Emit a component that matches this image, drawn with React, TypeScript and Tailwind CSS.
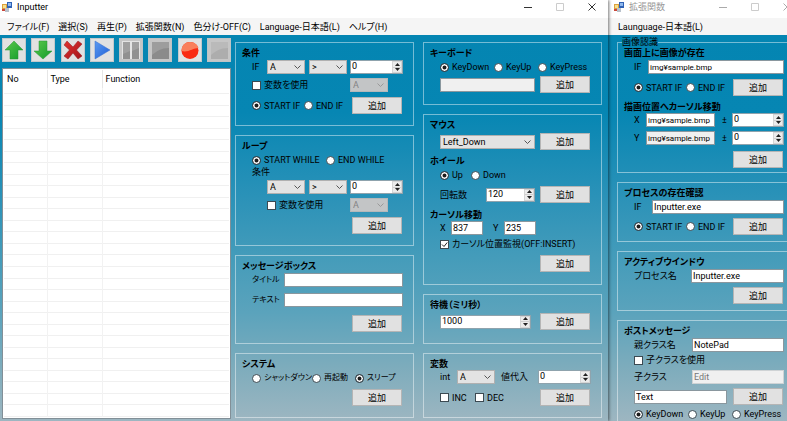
import { useId, type ReactNode } from 'react';

type P = { className?: string };

function Group({ title, children, className = '' }: P & { title: string; children: ReactNode }) {
  return (
    <section className={`flex flex-col border border-white/45 pl-4 pt-1 ${className}`}>
      <Heading>{title}</Heading>
      {children}
    </section>
  );
}

function Heading({ children, className = '' }: P & { children: ReactNode }) {
  return <h2 className={`-ml-2.5 h-3 whitespace-nowrap font-bold leading-3 ${className}`}>{children}</h2>;
}

function Row({ children, className = '' }: P & { children: ReactNode }) {
  return <div className={`flex shrink-0 items-center whitespace-nowrap ${className}`}>{children}</div>;
}

function Add({ className = '' }: P) {
  return (
    <button
      type="button"
      className={`ml-auto mr-px h-[17px] w-[50px] shrink-0 border border-[#b5b5b5] bg-[#e1e1e1] leading-3 ${className}`}
    >
      追加
    </button>
  );
}

function Pick({ value, label, disabled, className = '' }: P & { value: string; label: string; disabled?: boolean }) {
  return (
    <span
      className={`relative block h-3.5 shrink-0 border ${
        disabled ? 'border-[#b4b8ba] bg-[#c3c5c6] text-[#838383]' : 'border-[#b0b0b0] bg-[#e3e3e3]'
      } ${className}`}
    >
      <select
        aria-label={label}
        disabled={disabled}
        className="block h-full w-full appearance-none pl-0.5 leading-3 opacity-100 outline-none"
      >
        <option>{value}</option>
      </select>
      <svg viewBox="0 0 7 4" className="pointer-events-none absolute right-[3px] top-1 h-1 w-[7px]" fill="none" stroke={disabled ? '#999' : '#555'}>
        <path d="M.5.5l3 3 3-3" />
      </svg>
    </span>
  );
}

function Num({ value, label, className = '' }: P & { value: string; label: string }) {
  return (
    <span className={`flex h-3.5 shrink-0 border border-[#8fa3ad] bg-white ${className}`}>
      <input aria-label={label} defaultValue={value} className="h-2.5 w-0 flex-1 pl-px leading-[10px] outline-none" />
      <span className="flex w-2.5 flex-col border border-[#d5d5d5] bg-[#ececec]">
        <button type="button" aria-label="+" className="flex flex-1 items-center justify-center border-b border-[#cfcfcf]">
          <svg viewBox="0 0 5 3" className="h-[3px] w-[5px]">
            <path d="M2.5 0L5 3H0z" fill="#222" />
          </svg>
        </button>
        <button type="button" aria-label="-" className="flex flex-1 items-center justify-center">
          <svg viewBox="0 0 5 3" className="h-[3px] w-[5px]">
            <path d="M2.5 3L5 0H0z" fill="#222" />
          </svg>
        </button>
      </span>
    </span>
  );
}

function Text({ value = '', label, disabled, className = 'bg-white' }: P & { value?: string; label: string; disabled?: boolean }) {
  return (
    <input
      aria-label={label}
      defaultValue={value}
      disabled={disabled}
      className={`h-3.5 border border-[#8a979e] px-px leading-3 outline-none ${className}`}
    />
  );
}

function Radio({ name, children, on, className = '' }: P & { name: string; children: ReactNode; on?: boolean }) {
  return (
    <label className={`flex h-3 items-center gap-[3px] leading-3 ${className}`}>
      <input
        type="radio"
        name={name}
        defaultChecked={on}
        className="size-[9px] shrink-0 appearance-none rounded-full border border-[#3c4a52] bg-white checked:bg-[#1c1c1c] checked:shadow-[inset_0_0_0_1.5px_white]"
      />
      {children}
    </label>
  );
}

function Check({ children, on, className = '' }: P & { children: ReactNode; on?: boolean }) {
  return (
    <label className={`flex h-3 items-center gap-[3px] leading-3 ${className}`}>
      <span className="relative block size-[9px] shrink-0">
        <input type="checkbox" defaultChecked={on} className="peer block size-full appearance-none border border-[#3c4a52] bg-white" />
        <svg viewBox="0 0 9 9" className="pointer-events-none invisible absolute inset-0 peer-checked:visible" fill="none" stroke="#222">
          <path d="M2 4.5l2 2 3.2-4" />
        </svg>
      </span>
      {children}
    </label>
  );
}

function StartEnd({ children }: { children?: ReactNode }) {
  const id = useId();
  return (
    <>
      <Radio name={id} on className="w-[52px]">START IF</Radio>
      <Radio name={id}>END IF</Radio>
      {children}
    </>
  );
}

function Keys({ className = '' }: P) {
  const id = useId();
  return (
    <Row className={className}>
      <Radio name={id} on className="w-[54px]">KeyDown</Radio>
      <Radio name={id} className="w-11">KeyUp</Radio>
      <Radio name={id}>KeyPress</Radio>
    </Row>
  );
}

function TitleBar({ title, inactive }: { title: string; inactive?: boolean }) {
  const ink = inactive ? '#aaa' : '#333';
  return (
    <header className={`flex h-[18px] shrink-0 items-start bg-white pl-0.5 ${inactive ? '-mr-1 pr-0 text-[#999]' : 'pr-3 text-black'}`}>
      <svg viewBox="0 0 10 10" className={`mt-0.5 size-2.5 ${inactive ? 'ml-1' : ''}`}>
        <path d="M0 2h5v5H0z" fill="#dca13c" />
        <path d="M1 3h3v3H1z" fill="#f7e08c" />
        <path d="M5 0h5v6H5z" fill="#2f62b5" />
        <path d="M6 1h3v3H6z" fill="#8fb8ee" />
        <path d="M3 6h4v4H3z" fill="#b9c2cc" />
        <path d="M0 7h3v2H0z" fill="#c9473a" />
      </svg>
      <h1 className="ml-[5px] mt-px leading-3">{title}</h1>
      <div className="ml-auto mt-[3px] flex gap-6">
        <button type="button" aria-label="Minimize" className="block">
          <svg viewBox="0 0 8 8" className="size-2" stroke={ink}><path d="M0 4.5h8" /></svg>
        </button>
        <button type="button" aria-label="Maximize" className="block">
          <svg viewBox="0 0 8 8" className="size-2" stroke="#ccc" fill="none"><path d="M.5.5h7v7h-7z" /></svg>
        </button>
        <button type="button" aria-label="Close" className="block">
          <svg viewBox="0 0 8 8" className="size-2" stroke={ink}><path d="M.5.5l7 7M7.5.5l-7 7" /></svg>
        </button>
      </div>
    </header>
  );
}

const tools: { name: string; art: ReactNode; off?: boolean }[] = [
  { name: 'Up', art: <path d="M11 2L20 11H15V20H7V11H2z" fill="url(#green)" stroke="#27963a" strokeWidth=".5" /> },
  { name: 'Down', art: <path d="M11 20L2 12H7V2H15V12H20z" fill="url(#green)" stroke="#27963a" strokeWidth=".5" /> },
  { name: 'Delete', art: <path d="M5 2L11 8L16 2L20 5L14.500 11L20 17L16 20L11 14L6 20L2 17L7.500 11L2 6z" fill="url(#red)" stroke="#8e1c20" strokeWidth=".5" /> },
  { name: 'Play', art: <path d="M4 2L19 11L4 20z" fill="url(#blue)" stroke="#3a70cf" strokeWidth=".5" /> },
  {
    name: 'Pause',
    off: true,
    art: (
      <>
        <path d="M2 2h18v18H2z" fill="#e4e4e4" />
        <path d="M3 3h7v17H3zM12 3h7v17h-7z" fill="#909090" />
        <path d="M3 3h7v9L3 15zM12 3h7v6l-7 3z" fill="#a0a0a0" />
      </>
    ),
  },
  {
    name: 'Stop',
    off: true,
    art: (
      <>
        <path d="M3 3h17v17H3z" fill="#8b8b8b" />
        <path d="M3 3h17v6C12 9 8 12 3 16z" fill="#9d9d9d" />
      </>
    ),
  },
  {
    name: 'Record',
    art: (
      <>
        <circle cx="11" cy="11.500" r="8.500" fill="#f92a12" />
        <path d="M2.500 12C2.500 6 6.500 3 11 3S19 6 19.500 9C14 9 9 14 2.500 12z" fill="#f97f5c" />
      </>
    ),
  },
  {
    name: 'Record stop',
    off: true,
    art: (
      <>
        <path d="M3 3h17v17H3z" fill="#adadad" />
        <path d="M3 3h17v6C12 9 8 12 3 16z" fill="#bababa" />
      </>
    ),
  },
];

function Grad({ id, a, b }: { id: string; a: string; b: string }) {
  return (
    <linearGradient id={id} x1="0" y1="0" x2="1" y2="1">
      <stop offset="0" stopColor={a} />
      <stop offset="1" stopColor={b} />
    </linearGradient>
  );
}

function Toolbar() {
  return (
    <div className="flex justify-between">
      <svg className="absolute size-0" aria-hidden="true">
        <defs>
          <Grad id="green" a="#5cc94c" b="#129b2b" />
          <Grad id="red" a="#e2332f" b="#a3141b" />
          <Grad id="blue" a="#5c9af0" b="#1f60d8" />
        </defs>
      </svg>
      {tools.map((t) => (
        <button
          key={t.name}
          type="button"
          aria-label={t.name}
          className={`size-6 border ${t.off ? 'border-[#bfc4c6] bg-[#c6c6c6]' : 'border-[#c4c9cc] bg-[#e1e1e1]'}`}
        >
          <svg viewBox="0 0 22 22" className="size-[22px]">{t.art}</svg>
        </button>
      ))}
    </div>
  );
}

function ActionList() {
  return (
    <div className="flex-1 border border-[#828f97] bg-white p-px">
      <table className="h-full w-full table-fixed border-collapse">
        <thead>
          <tr className="h-[18px] text-left leading-3">
            <th className="w-[43px] border-r border-[#e6e6e6] pl-[3px] font-normal">No</th>
            <th className="w-[55px] border-r border-[#e6e6e6] pl-[3px] font-normal">Type</th>
            <th className="pl-[3px] font-normal">Function</th>
          </tr>
        </thead>
        <tbody>
          {Array.from({ length: 29 }, (_, i) => (
            <tr key={i} className="border-b border-[#f0f0f0]">
              <td className="border-r border-[#f2f2f2]" />
              <td className="border-r border-[#f2f2f2]" />
              <td />
            </tr>
          ))}
        </tbody>
      </table>
    </div>
  );
}

const backdrop =
  'bg-[linear-gradient(#0485b2_0%,#0686b3_20%,#2b92b8_42%,#459cba_58%,#5ba3bc_72%,#7dacbc_86%,#9db6c1_100%)]';

function MainWindow() {
  const loop = useId();
  const sys = useId();
  const wheel = useId();
  return (
    <main className="z-10 flex min-w-0 flex-1 flex-col shadow-[1px_0_3px_#0008]">
      <TitleBar title="Inputter" />
      <nav className="flex h-[17px] shrink-0 items-center gap-[9px] whitespace-nowrap bg-[#f5f5f5] pl-[7px]">
        {['ファイル(F)', '選択(S)', '再生(P)', '拡張関数(N)', '色分け-OFF(C)', 'Language-日本語(L)', 'ヘルプ(H)'].map((m) => (
          <button key={m} type="button">{m}</button>
        ))}
      </nav>
      <div className={`flex min-h-0 flex-1 pl-0.5 pr-1.5 ${backdrop}`}>
        <div className="mb-0.5 mr-1 mt-[3px] flex min-w-0 flex-1 flex-col gap-1.5">
          <Toolbar />
          <ActionList />
        </div>
        <div className="mr-[9px] mt-[7px] flex w-[179px] shrink-0 flex-col gap-[9px]">
          <Group title="条件" className="pb-[11px] pr-2.5">
            <Row className="mt-px">
              <span className="w-[15px]">IF</span>
              <Pick label="変数" value="A" className="mr-1 w-[38px]" />
              <Pick label="比較" value="&gt;" className="w-[38px]" />
              <Num label="値" value="0" className="ml-auto w-[53px]" />
            </Row>
            <Row className="mt-1 justify-between">
              <Check>変数を使用</Check>
              <Pick label="比較変数" value="A" disabled className="mr-[15px] w-[38px]" />
            </Row>
            <Row className="mt-[5px]">
              <StartEnd><Add /></StartEnd>
            </Row>
          </Group>
          <Group title="ループ" className="pb-[11px] pr-2.5">
            <Row className="mt-0.5">
              <Radio name={loop} on className="w-[74px]">START WHILE</Radio>
              <Radio name={loop}>END WHILE</Radio>
            </Row>
            <Row className="h-3 leading-3">条件</Row>
            <Row className="mt-0.5 pl-[15px]">
              <Pick label="変数" value="A" className="mr-1 w-[38px]" />
              <Pick label="比較" value="&gt;" className="w-[38px]" />
              <Num label="値" value="0" className="ml-auto w-[53px]" />
            </Row>
            <Row className="mt-1 justify-between pl-[15px]">
              <Check>変数を使用</Check>
              <Pick label="比較変数" value="A" disabled className="mr-[15px] w-[38px]" />
            </Row>
            <Row className="mt-[5px]"><Add /></Row>
          </Group>
          <Group title="メッセージボックス" className="pb-[11px] pr-2.5">
            <Row className="mt-px">
              <span className="w-8 shrink-0 text-[8px]">タイトル</span>
              <Text label="タイトル" className="min-w-0 flex-1 bg-white" />
            </Row>
            <Row className="mt-1.5">
              <span className="w-8 shrink-0 text-[8px]">テキスト</span>
              <Text label="テキスト" className="min-w-0 flex-1 bg-white" />
            </Row>
            <Row className="mt-2"><Add /></Row>
          </Group>
          <Group title="システム" className="pb-[11px] pr-2.5">
            <Row className="mt-0.5 text-[8px]">
              <Radio name={sys} className="w-[60px]">シャットダウン</Radio>
              <Radio name={sys} className="w-[43px]">再起動</Radio>
              <Radio name={sys} on>スリープ</Radio>
            </Row>
            <Row className="mt-[5px]"><Add /></Row>
          </Group>
        </div>
        <div className="mt-[7px] flex w-[179px] shrink-0 flex-col gap-[9px]">
          <Group title="キーボード" className="pb-[11px] pr-2.5">
            <Keys className="mt-0.5" />
            <Row className="mt-[3px]">
              <Text label="キー" className="w-[95px] bg-[#f0f0f0]" />
              <Add />
            </Row>
          </Group>
          <Group title="マウス" className="pb-3 pr-2.5">
            <Row className="mt-0.5">
              <Pick label="マウス" value="Left_Down" className="w-[95px]" />
              <Add />
            </Row>
            <Heading className="mt-[5px]">ホイール</Heading>
            <Row className="mt-0.5">
              <Radio name={wheel} on className="w-[31px]">Up</Radio>
              <Radio name={wheel}>Down</Radio>
            </Row>
            <Row className="mt-[5px]">
              <span className="w-[46px]">回転数</span>
              <Num label="回転数" value="120" className="w-[49px]" />
              <Add />
            </Row>
            <Heading className="mt-1.5">カーソル移動</Heading>
            <Row>
              <span className="w-[11px]">X</span>
              <Text label="X" value="837" className="mr-2.5 w-8 bg-white" />
              <span className="w-[11px]">Y</span>
              <Text label="Y" value="235" className="w-8 bg-white" />
            </Row>
            <Row className="mt-[3px]"><Check on>カーソル位置監視(OFF:INSERT)</Check></Row>
            <Row className="mt-[5px]"><Add /></Row>
          </Group>
          <Group title="待機（ミリ秒）" className="pb-[13px] pr-2.5">
            <Row className="mt-0.5">
              <Num label="待機（ミリ秒）" value="1000" className="w-[91px]" />
              <Add />
            </Row>
          </Group>
          <Group title="変数" className="pb-[11px] pr-2.5">
            <Row>
              <span className="w-[17px]">int</span>
              <Pick label="変数" value="A" className="mr-1.5 w-[38px]" />
              値代入
              <Num label="値代入" value="0" className="ml-auto w-[53px]" />
            </Row>
            <Row className="mt-[5px]">
              <Check className="w-[35px]">INC</Check>
              <Check>DEC</Check>
              <Add />
            </Row>
          </Group>
        </div>
      </div>
    </main>
  );
}

function ExtensionWindow() {
  return (
    <aside className="flex w-[179px] shrink-0 flex-col">
      <TitleBar title="拡張関数" inactive />
      <nav className="flex h-[17px] shrink-0 items-center whitespace-nowrap bg-[#f5f5f5] pl-2.5">
        <button type="button">Launguage-日本語(L)</button>
      </nav>
      <div className={`flex min-h-0 flex-1 flex-col gap-[9px] pl-[9px] pt-0.5 ${backdrop}`}>
        <fieldset className="flex shrink-0 flex-col border border-r-0 border-white/45 pb-1 pl-4 pr-[3px]">
          <legend className="-ml-3 h-2.5 leading-[10px]">画像認識</legend>
          <Heading>画面上に画像が存在</Heading>
          <Row className="mt-px">
            <span className="w-3.5 shrink-0">IF</span>
            <Text label="IF" value="img¥sample.bmp" className="min-w-0 flex-1 bg-white text-[8px]" />
          </Row>
          <Row className="mt-[5px]"><StartEnd><Add /></StartEnd></Row>
          <Heading className="mt-[5px]">描画位置へカーソル移動</Heading>
          <Row>
            <span className="w-3">X</span>
            <Text label="X" value="img¥sample.bmp" className="mr-[7px] w-[69px] bg-white text-[8px]" />±
            <Num label="X ±" value="0" className="ml-auto w-[52px]" />
          </Row>
          <Row className="mt-1">
            <span className="w-3">Y</span>
            <Text label="Y" value="img¥sample.bmp" className="mr-[7px] w-[69px] bg-[#f0f0f0] text-[8px]" />±
            <Num label="Y ±" value="0" className="ml-auto w-[52px]" />
          </Row>
          <Row className="mt-1.5"><Add /></Row>
        </fieldset>
        <Group title="プロセスの存在確認" className="border-r-0 pb-1.5 pr-[3px]">
          <Row className="mt-px">
            <span className="w-[18px] shrink-0">IF</span>
            <Text label="IF" value="Inputter.exe" className="min-w-0 flex-1 bg-white" />
          </Row>
          <Row className="mt-1"><StartEnd><Add /></StartEnd></Row>
        </Group>
        <Group title="アクティブウインドウ" className="border-r-0 pb-1.5 pr-[3px]">
          <Row className="mt-px">
            <span className="w-[57px] shrink-0">プロセス名</span>
            <Text label="プロセス名" value="Inputter.exe" className="min-w-0 flex-1 bg-white" />
          </Row>
          <Row className="mt-1"><Add /></Row>
        </Group>
        <Group title="ポストメッセージ" className="border-r-0 pb-[5px] pr-[3px]">
          <Row className="mt-px">
            <span className="w-[58px] shrink-0">親クラス名</span>
            <Text label="親クラス名" value="NotePad" className="min-w-0 flex-1 bg-white" />
          </Row>
          <Row className="mt-0.5"><Check>子クラスを使用</Check></Row>
          <Row className="mt-1">
            <span className="w-[58px] shrink-0">子クラス</span>
            <Text label="子クラス" value="Edit" disabled className="min-w-0 flex-1 border-[#cfd3d5] bg-[#f0f0f0] text-[#777]" />
          </Row>
          <Row className="mt-1">
            <Text label="Text" value="Text" className="w-[93px] bg-white" />
            <Add />
          </Row>
          <Keys className="mt-[3px]" />
        </Group>
      </div>
    </aside>
  );
}

export default function App() {
  return (
    <div className="flex h-screen overflow-hidden font-['Roboto','Noto_Sans_CJK_JP',sans-serif] text-[9px] leading-3 text-black [font-feature-settings:'palt']">
      <MainWindow />
      <ExtensionWindow />
    </div>
  );
}
